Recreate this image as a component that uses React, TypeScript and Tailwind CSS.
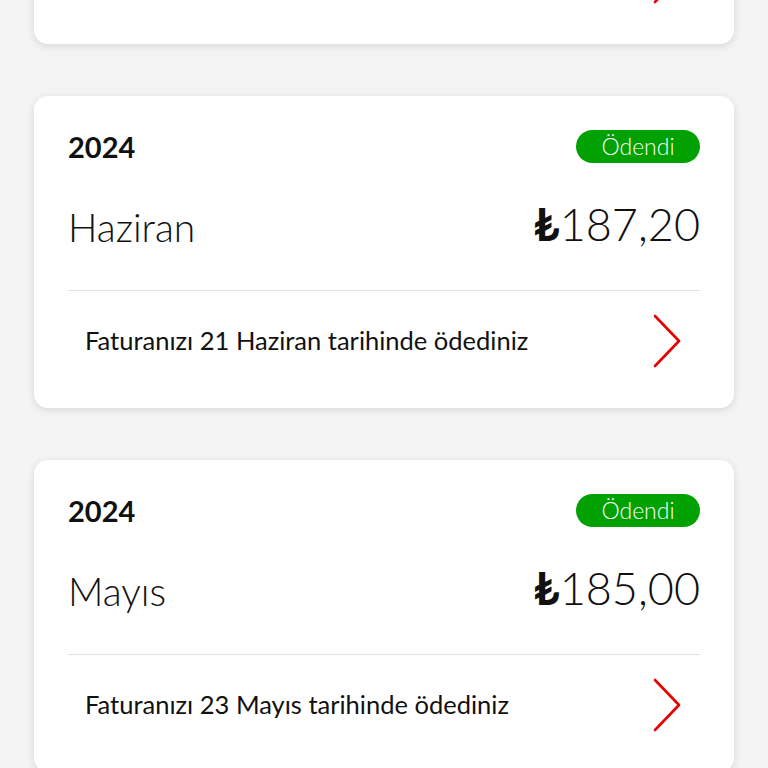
import React from "react";

type Bill = { year: string; month: string; amount: string; text: string };

const bills: Bill[] = [
  { year: "2024", month: "Temmuz", amount: "187,20", text: "Faturanızı 22 Temmuz tarihinde ödediniz" },
  { year: "2024", month: "Haziran", amount: "187,20", text: "Faturanızı 21 Haziran tarihinde ödediniz" },
  { year: "2024", month: "Mayıs", amount: "185,00", text: "Faturanızı 23 Mayıs tarihinde ödediniz" },
];

function Chevron() {
  return (
    <svg width="30" height="54" viewBox="0 0 30 54" fill="none">
      <path d="M3 2 L27 27 L3 52" stroke="#e60000" strokeWidth="2.6" strokeLinecap="round" strokeLinejoin="round" />
    </svg>
  );
}

function Card({ b }: { b: Bill }) {
  return (
    <div className="bg-white rounded-[14px] shadow-[0_2px_8px_rgba(0,0,0,0.12)] px-[34px] pt-[34px] h-[312px] flex flex-col">
      <div className="flex items-center justify-between h-[33px]">
        <span className="text-[29px] font-bold text-[#111] leading-none">{b.year}</span>
        <span className="bg-[#00a100] text-white text-[23px] font-light leading-none h-[33px] w-[124px] rounded-full flex items-center justify-center">
          Ödendi
        </span>
      </div>
      <div className="flex items-end justify-between mt-[34px] h-[50px]">
        <span className="text-[39px] font-light text-[#111] leading-none">{b.month}</span>
        <span className="text-[45px] font-light text-[#111] leading-none">
          <span className="font-bold">₺</span>
          {b.amount}
        </span>
      </div>
      <div className="h-px bg-[#e3e3e3] mt-[43px]" />
      <div className="flex items-center justify-between h-[100px] pl-[17px] pr-[18px]">
        <span className="text-[25.5px] text-[#111] leading-none">{b.text}</span>
        <Chevron />
      </div>
    </div>
  );
}

export default function App() {
  return (
    <div className="min-h-[768px] bg-[#f4f4f4] overflow-hidden" style={{ fontFamily: "Lato, 'Open Sans', sans-serif" }}>
      <div className="flex flex-col gap-[52px] px-[34px] mt-[-268px]">
        {bills.map((b, i) => (
          <Card key={i} b={b} />
        ))}
      </div>
    </div>
  );
}
